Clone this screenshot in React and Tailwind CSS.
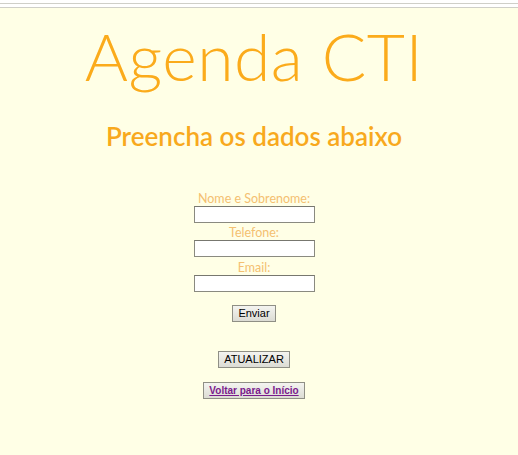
export default function App() {
    const btn =
        "border border-[#8f8f85] bg-gradient-to-b from-[#f4f4f0] to-[#dcdcd4] text-black text-[11px] leading-none px-[5px] py-[2px] font-['Liberation_Sans',Arial,sans-serif]";
    const label = "text-[12.5px] leading-[15px] text-[#f4c071] font-['Lato',sans-serif] font-normal";
    const input = "w-[121px] h-[17px] bg-white border border-[#8a8a80] border-t-[#77776f] outline-none";

    return (
        <div className="min-h-[455px] w-[518px] bg-[#ffffe6]">
            {/* linhas do topo */}
            <div className="bg-white">
                <div className="h-[3px]"></div>
                <div className="h-px bg-[#cfcfc8]"></div>
                <div className="h-[3px]"></div>
                <div className="h-px bg-[#cfcfc8]"></div>
            </div>

            <div className="w-[508px] flex flex-col items-center">
                <h1 className="mt-[10px] text-[66px] leading-[76px] text-[#fbab1b] font-['Lato',sans-serif] font-light tracking-[0.5px]">
                    Agenda CTI
                </h1>
                <h2 className="mt-[26px] text-[26px] leading-[32px] text-[#f8a91d] font-['Lato',sans-serif] font-semibold">
                    Preencha os dados abaixo
                </h2>

                <form onSubmit={(e) => e.preventDefault()} className="mt-[39px] flex flex-col items-center">
                    <label className={label}>Nome e Sobrenome:</label>
                    <input type="text" className={input} />
                    <label className={`${label} mt-[2px]`}>Telefone:</label>
                    <input type="text" className={input} />
                    <label className={`${label} mt-[3px]`}>Email:</label>
                    <input type="text" className={input} />
                    <button type="submit" className={`${btn} mt-[13px] h-[17px]`}>
                        Enviar
                    </button>
                </form>

                <button className={`${btn} mt-[29px] h-[17px] text-[10.5px]`}>ATUALIZAR</button>

                <button className={`${btn} mt-[14px] h-[17px] px-[5px]`}>
                    <a href="#" className="text-[#7a1a8c] underline font-bold text-[10px]">
                        Voltar para o Início
                    </a>
                </button>
            </div>
        </div>
    );
}
